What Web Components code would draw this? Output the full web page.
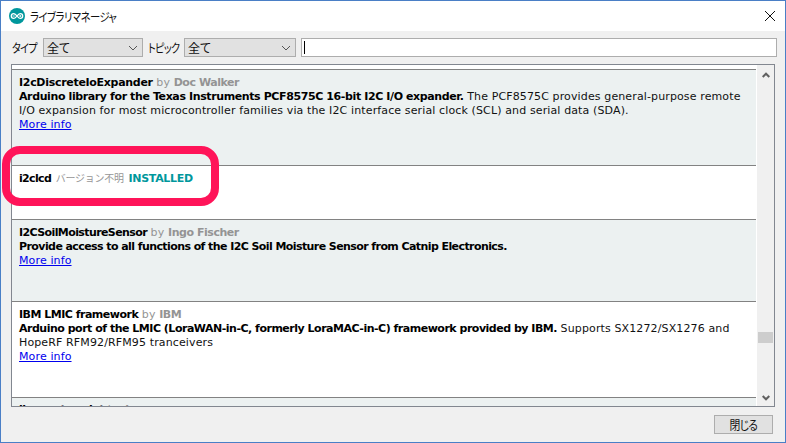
<!DOCTYPE html>
<html lang="ja">
<head>
<meta charset="utf-8">
<title>ライブラリマネージャ</title>
<style>
html, body { margin: 0; height: 100%; overflow: hidden; background: #f0f0f0; }
</style>
</head>
<body>
<lib-window>
  <lib-titlebar slot="title">ライブラリマネージャ</lib-titlebar>
  <lib-filter-bar slot="filters"></lib-filter-bar>
  <lib-list slot="list">
    <lib-item shade name="I2cDiscreteIoExpander" author="Doc Walker" style="height:96px;--name-track:-.3px;--desc-track:-.39px">
      <b>Arduino library for the Texas Instruments PCF8575C 16-bit I2C I/O expander.</b> The PCF8575C provides general-purpose remote<br>I/O expansion for most microcontroller families via the I2C interface serial clock (SCL) and serial data (SDA).<br><a>More info</a>
    </lib-item>
    <lib-item name="i2clcd" version="バージョン不明" installed style="height:54px;--name-track:-.66px"></lib-item>
    <lib-item shade name="I2CSoilMoistureSensor" author="Ingo Fischer" style="height:82px;--name-track:-.6px;--desc-track:-.58px">
      <b>Provide access to all functions of the I2C Soil Moisture Sensor from Catnip Electronics.</b><br><a>More info</a>
    </lib-item>
    <lib-item name="IBM LMIC framework" author="IBM" style="height:96px;--name-track:-.5px;--desc-track:-.49px">
      <b>Arduino port of the LMIC (LoraWAN-in-C, formerly LoraMAC-in-C) framework provided by IBM.</b> Supports SX1272/SX1276 and<br>HopeRF RFM92/RFM95 tranceivers<br><a>More info</a>
    </lib-item>
    <lib-item shade name="ibm watson iot" author="ian craggs" style="height:96px;padding-top:5px;--name-track:-.5px"></lib-item>
  </lib-list>
  <lib-button slot="footer">閉じる</lib-button>
  <lib-callout slot="overlay"></lib-callout>
</lib-window>

<script>
const UI_FONT = '"Noto Sans CJK JP", "Liberation Sans", sans-serif';
const LIST_FONT = '"DejaVu Sans", "Noto Sans CJK JP", sans-serif';

class LibWindow extends HTMLElement {
    constructor() {
        super();
        this.attachShadow({ mode: 'open' }).innerHTML = `
<style>
:host {
    display: flex;
    flex-direction: column;
    position: relative;
    box-sizing: border-box;
    width: 786px;
    height: 443px;
    border: 1px solid #4a7fc6;
    background: #f0f0f0;
    font-family: ${UI_FONT};
    font-feature-settings: "palt";
    overflow: hidden;
}
.main { padding: 0 9px 0 10px; }
.footer { display: flex; justify-content: flex-end; padding: 8px 3px 0 0; }
</style>
<slot name="title"></slot>
<div class="main">
  <slot name="filters"></slot>
  <slot name="list"></slot>
  <div class="footer"><slot name="footer"></slot></div>
</div>
<slot name="overlay"></slot>
`;
    }
}

class LibTitlebar extends HTMLElement {
    constructor() {
        super();
        this.attachShadow({ mode: 'open' }).innerHTML = `
<style>
:host {
    display: flex;
    align-items: center;
    height: 30px;
    background: #fff;
    font-size: 12px;
    color: #111;
    padding: 0 9px 0 8px;
    flex: none;
}
.logo { width: 16px; height: 16px; margin-right: 5px; flex: none; }
.box { flex: 1; }
.text { display: inline-block; letter-spacing: -.6px; transform: scaleX(.86); transform-origin: 0 50%; }
.close { width: 12px; height: 12px; flex: none; }
</style>
<svg class="logo" viewBox="0 0 17 17">
  <circle cx="8.5" cy="8.5" r="8.5" fill="#00979c"/>
  <path d="M5 5.900a2.600 2.600 0 1 0 0 5.200c1.600 0 2.400-1.400 3.500-2.600C9.600 7.300 10.400 5.900 12 5.900a2.600 2.600 0 1 1 0 5.200c-1.600 0-2.400-1.400-3.500-2.600C7.400 7.300 6.600 5.900 5 5.900z" fill="none" stroke="#fff" stroke-width="1.300"/>
  <path d="M3.700 8.500h2.400M10.800 8.500h2.400M12 7.400v2.200" stroke="#fff" stroke-width=".9" fill="none"/>
</svg>
<div class="box"><span class="text"><slot></slot></span></div>
<svg class="close" viewBox="0 0 12 12"><path d="M1 1l10 10M11 1L1 11" stroke="#111" stroke-width="1" fill="none"/></svg>
`;
    }
}

class LibCombo extends HTMLElement {
    constructor() {
        super();
        this.attachShadow({ mode: 'open' }).innerHTML = `
<style>
:host {
    display: flex;
    align-items: center;
    box-sizing: border-box;
    height: 19px;
    border: 1px solid #adadad;
    background: #e1e1e1;
    font-size: 12px;
    color: #111;
    padding: 0 4px 0 3px;
}
.value { flex: 1; }
svg { width: 10px; height: 6px; }
</style>
<span class="value"><slot></slot></span>
<svg viewBox="0 0 10 6"><path d="M1 1l4 4 4-4" fill="none" stroke="#555" stroke-width="1"/></svg>
`;
    }
}

class LibFilterBar extends HTMLElement {
    constructor() {
        super();
        this.attachShadow({ mode: 'open' }).innerHTML = `
<style>
:host {
    display: grid;
    grid-template-columns: 32px 100px 41px 112px 1fr;
    align-items: center;
    height: 19px;
    margin-top: 7px;
    margin-right: -1px;
    font-size: 12px;
    color: #111;
}
.label { padding-left: 1px; white-space: nowrap; }
.label.second { padding-left: 5px; }
.label span { display: inline-block; letter-spacing: -.8px; transform: scaleX(.84); transform-origin: 0 50%; }
.search {
    box-sizing: border-box;
    height: 19px;
    margin-left: 5px;
    border: 1px solid #adadad;
    background: #fff;
    display: flex;
    align-items: center;
    padding-left: 2px;
}
.caret { width: 1px; height: 13px; background: #000; }
</style>
<div class="label"><span>タイプ</span></div>
<lib-combo>全て</lib-combo>
<div class="label second"><span>トピック</span></div>
<lib-combo>全て</lib-combo>
<div class="search"><div class="caret"></div></div>
`;
    }
}

class LibScrollbar extends HTMLElement {
    constructor() {
        super();
        this.attachShadow({ mode: 'open' }).innerHTML = `
<style>
:host {
    display: flex;
    flex-direction: column;
    align-items: center;
    width: 17px;
    flex: none;
    background: #f0f0f0;
    box-sizing: border-box;
}
svg { width: 8px; height: 6px; flex: none; }
.up { margin-top: 7px; }
.track { flex: 1; align-self: stretch; padding: 0 1px; display: flex; flex-direction: column; }
.gap { height: 254px; flex: none; }
.thumb { height: 11px; background: #cdcdcd; flex: none; }
.down { margin-bottom: 5px; }
</style>
<svg class="up" viewBox="0 0 8 6"><path d="M.7 5l3.300-3.300 3.300 3.300" fill="none" stroke="#606060" stroke-width="2"/></svg>
<div class="track"><div class="gap"></div><div class="thumb"></div></div>
<svg class="down" viewBox="0 0 8 6"><path d="M.7 1l3.300 3.300 3.300-3.300" fill="none" stroke="#606060" stroke-width="2"/></svg>
`;
    }
}

class LibList extends HTMLElement {
    constructor() {
        super();
        this.attachShadow({ mode: 'open' }).innerHTML = `
<style>
:host {
    display: flex;
    box-sizing: border-box;
    height: 343px;
    margin: 7px 1px 0 0;
    border: 1px solid #828790;
    background: #fff;
    overflow: hidden;
}
.viewport { flex: 1; min-width: 0; overflow: hidden; padding-top: 4px; border-right: 1px solid #fff; }
</style>
<div class="viewport"><slot></slot></div>
<lib-scrollbar></lib-scrollbar>
`;
    }
}

class LibItem extends HTMLElement {
    constructor() {
        super();
        this.attachShadow({ mode: 'open' });
    }

    connectedCallback() {
        const name = this.getAttribute('name') || '';
        const author = this.getAttribute('author');
        const version = this.getAttribute('version');
        const installed = this.hasAttribute('installed');
        this.shadowRoot.innerHTML = `
<style>
:host {
    display: block;
    box-sizing: border-box;
    border-top: 1px solid #828282;
    padding: 6px 7px 0 7px;
    background: #fff;
    font-family: ${LIST_FONT};
    font-feature-settings: normal;
    font-size: 11px;
    line-height: 14px;
    letter-spacing: .125px;
    color: #111;
    white-space: nowrap;
    overflow: hidden;
}
:host([shade]) { background: #ecf1f1; }
.name { font-weight: 700; color: #000; letter-spacing: var(--name-track, -.4px); }
.by { color: #949494; }
.by b { font-weight: 700; letter-spacing: -.45px; }
.ver { color: #969696; font-size: 10px; letter-spacing: -.25px; margin-left: 1px; }
.inst { color: #00979c; font-weight: 700; letter-spacing: -.3px; margin-left: 1px; }
::slotted(a) { color: #0000ee; text-decoration: underline; }
::slotted(b) { font-weight: 700; color: #000; letter-spacing: var(--desc-track, -.4px); }
</style>
<div><span class="name"></span> ${author ? `<span class="by">by <b class="author"></b></span>` : ''}${version ? `<span class="ver"></span> ` : ''}${installed ? `<span class="inst">INSTALLED</span>` : ''}</div>
<div><slot></slot></div>
`;
        this.shadowRoot.querySelector('.name').textContent = name;
        if (author) this.shadowRoot.querySelector('.author').textContent = author;
        if (version) this.shadowRoot.querySelector('.ver').textContent = version;
    }
}

class LibButton extends HTMLElement {
    constructor() {
        super();
        this.attachShadow({ mode: 'open' }).innerHTML = `
<style>
:host {
    display: flex;
    align-items: center;
    justify-content: center;
    box-sizing: border-box;
    width: 59px;
    height: 19px;
    border: 1px solid #adadad;
    background: #e1e1e1;
    font-size: 12px;
    color: #111;
}
span { display: inline-block; letter-spacing: -.8px; transform: scaleX(.9); }
</style>
<span><slot></slot></span>
`;
    }
}

// red marker drawn over the list, around the i2clcd row
class LibCallout extends HTMLElement {
    constructor() {
        super();
        this.attachShadow({ mode: 'open' }).innerHTML = `
<style>
:host {
    position: absolute;
    left: 1px;
    top: 145px;
    width: 217px;
    height: 60px;
    box-sizing: border-box;
    border: 8px solid #ff1459;
    border-radius: 18px;
    pointer-events: none;
}
</style>
`;
    }
}

customElements.define('lib-window', LibWindow);
customElements.define('lib-titlebar', LibTitlebar);
customElements.define('lib-combo', LibCombo);
customElements.define('lib-filter-bar', LibFilterBar);
customElements.define('lib-scrollbar', LibScrollbar);
customElements.define('lib-list', LibList);
customElements.define('lib-item', LibItem);
customElements.define('lib-button', LibButton);
customElements.define('lib-callout', LibCallout);
</script>
</body>
</html>
